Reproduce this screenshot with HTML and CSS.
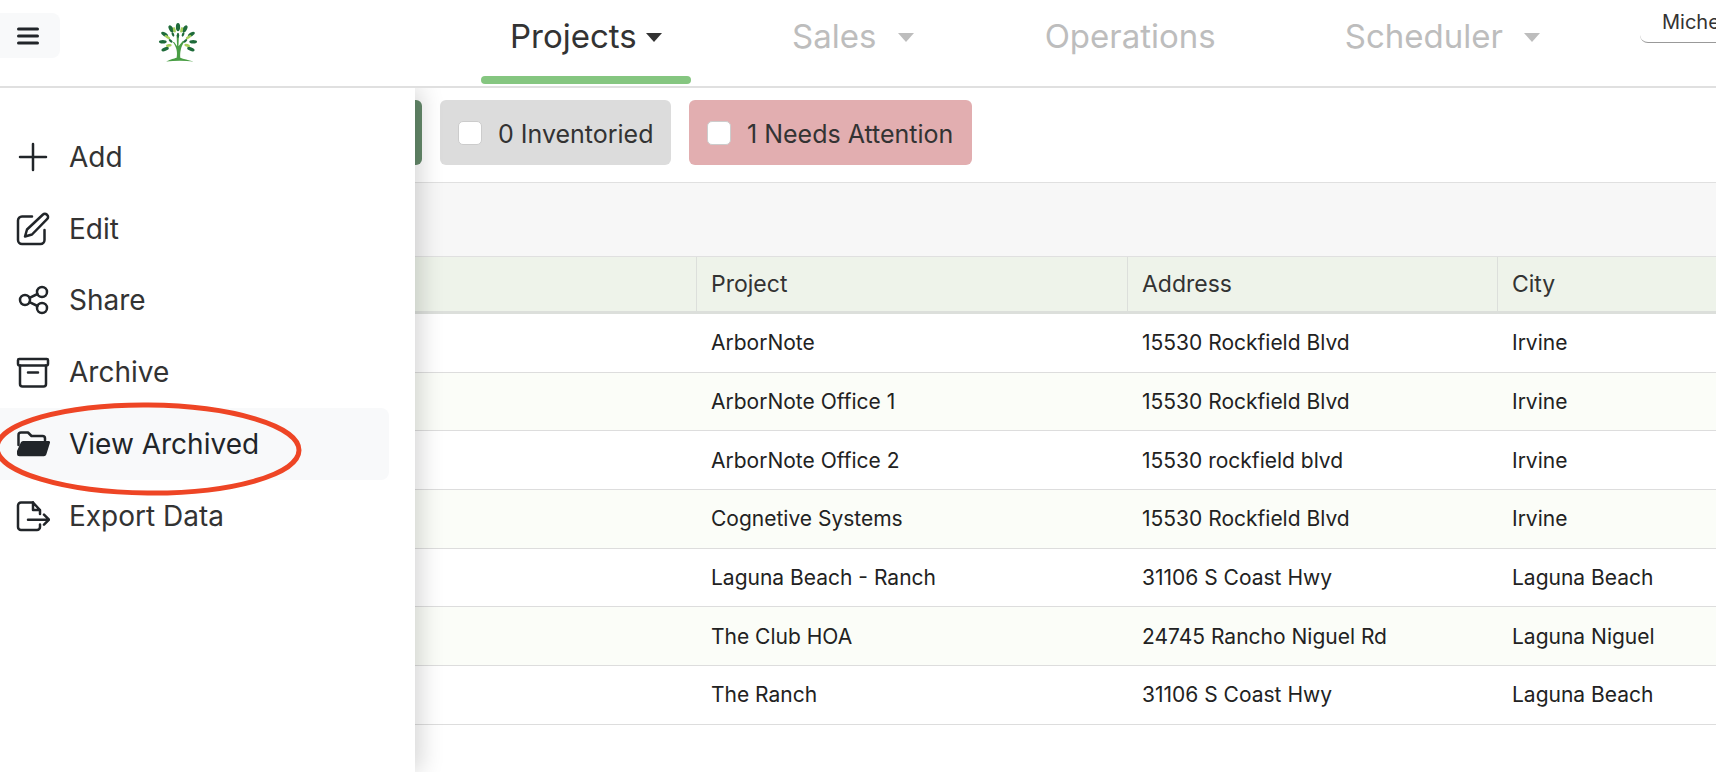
FILE: index.html
```html
<!DOCTYPE html>
<html lang="en">
<head>
    <meta charset="UTF-8" />
    <title>ArborNote Projects</title>
    <link rel="stylesheet" href="styles.css">
</head>
<body>
<header class="topbar">
    <button class="menu-btn" aria-label="Menu">
        <svg width="22" height="18" viewBox="0 0 22 18"><path d="M1.5 2h19M1.5 9h19M1.5 16h19" stroke="#212529" stroke-width="3" stroke-linecap="round"/></svg>
    </button>
    <div class="logo">
        <svg width="60" height="62" viewBox="0 0 60 62">
            <g transform="translate(30 54) scale(.92) translate(-30 -54)">
            <path d="M17 53.500C23 51 25 50.500 28.500 49.500 29.500 44 29 38 24 32L26 32.500 29 37 28.500 25H31L30.500 37 35.500 31 37 32C33 37 32 44 32.500 49.500 36 51 41 52 47 53.500 37 52.500 27 52.500 17 53.500Z" fill="#4a9e45"/>
            <g fill="#1f6b3a">
                <ellipse cx="30" cy="16" rx="2.300" ry="4.500"/>
                <ellipse cx="22.500" cy="18" rx="2.200" ry="4.200" transform="rotate(-30 22.500 18)"/>
                <ellipse cx="37.500" cy="18" rx="2.200" ry="4.200" transform="rotate(30 37.500 18)"/>
                <ellipse cx="15.500" cy="24" rx="2" ry="4.200" transform="rotate(-58 15.500 24)"/>
                <ellipse cx="44.500" cy="24" rx="2" ry="4.200" transform="rotate(58 44.500 24)"/>
                <ellipse cx="13.500" cy="32" rx="1.900" ry="4.200" transform="rotate(90 13.500 32)"/>
                <ellipse cx="46.500" cy="32" rx="1.900" ry="4.200" transform="rotate(90 46.500 32)"/>
                <ellipse cx="16" cy="40" rx="2" ry="4.200" transform="rotate(70 16 40)"/>
                <ellipse cx="44" cy="40" rx="2" ry="4.200" transform="rotate(-70 44 40)"/>
                <ellipse cx="30" cy="25" rx="1.300" ry="2.800"/>
                <ellipse cx="24.500" cy="24" rx="1.300" ry="2.500" transform="rotate(-20 24.500 24)"/>
                <ellipse cx="35.500" cy="24" rx="1.300" ry="2.500" transform="rotate(20 35.500 24)"/>
                <ellipse cx="22" cy="31" rx="1.300" ry="2.500" transform="rotate(-50 22 31)"/>
                <ellipse cx="38" cy="31" rx="1.300" ry="2.500" transform="rotate(50 38 31)"/>
            </g>
            <g fill="#a5cf5a">
                <ellipse cx="26" cy="19" rx="1.500" ry="3" transform="rotate(-15 26 19)"/>
                <ellipse cx="34" cy="19" rx="1.500" ry="3" transform="rotate(15 34 19)"/>
                <ellipse cx="18.500" cy="27" rx="1.500" ry="3.400" transform="rotate(-60 18.500 27)"/>
                <ellipse cx="41.500" cy="27" rx="1.500" ry="3.400" transform="rotate(60 41.500 27)"/>
                <ellipse cx="20" cy="36" rx="1.500" ry="3.200" transform="rotate(80 20 36)"/>
                <ellipse cx="40" cy="36" rx="1.500" ry="3.200" transform="rotate(-75 40 36)"/>
            </g>
            </g>
        </svg>
    </div>
    <nav class="main-nav">
        <a class="nav-item active">Projects <span class="caret"></span></a>
        <a class="nav-item sales">Sales <span class="caret wide"></span></a>
        <a class="nav-item ops">Operations</a>
        <a class="nav-item sched">Scheduler <span class="caret wide"></span></a>
    </nav>
    <div class="user-box">Miche</div>
</header>

<aside class="side-menu">
    <a class="side-item">
        <svg class="ico" viewBox="0 0 34 34"><path d="M17 4v26M4 17h26"/></svg>
        Add
    </a>
    <a class="side-item">
        <svg class="ico" viewBox="0 0 34 34"><path d="M16 4.500H6a4 4 0 0 0-4 4V28a4 4 0 0 0 4 4h18.500a4 4 0 0 0 4-4V18"/><path d="M27 2.500a2.600 2.600 0 0 1 3.700 0l.6.6a2.600 2.600 0 0 1 0 3.700L16 22.500l-7 2 2-7z"/></svg>
        Edit
    </a>
    <a class="side-item">
        <svg class="ico" viewBox="0 0 34 34"><circle cx="9" cy="17" r="5"/><circle cx="26" cy="9" r="5"/><circle cx="26" cy="25" r="5"/><path d="M13.500 14.800l8-3.800M13.500 19.200l8 3.800"/></svg>
        Share
    </a>
    <a class="side-item">
        <svg class="ico" viewBox="0 0 34 34"><rect x="2" y="4" width="30" height="6.500" rx="1.200"/><path d="M4 10.500V29a2.500 2.500 0 0 0 2.500 2.500h21A2.500 2.500 0 0 0 30 29V10.500M12 17.500h10"/></svg>
        Archive
    </a>
    <a class="side-item selected">
        <svg class="ico" viewBox="0 0 34 34"><path d="M2.500 18V8a2.500 2.500 0 0 1 2.500-2.500h7l3.500 3.500h11a2.500 2.500 0 0 1 2.500 2.500v2"/><path class="solid" d="M7 14h25.500a1.500 1.500 0 0 1 1.400 2l-3.600 11.500a2.500 2.500 0 0 1-2.400 1.800H3.500A2.500 2.500 0 0 1 1 26.800V24l3.800-8.500A2.400 2.400 0 0 1 7 14z"/></svg>
        View Archived
    </a>
    <a class="side-item">
        <svg class="ico" viewBox="0 0 34 34"><path d="M17 3.500H5a3 3 0 0 0-3 3V28a3 3 0 0 0 3 3h16a3 3 0 0 0 3-3v-2.500"/><path d="M17 3.500L24 11v4M17 3.500V11h7M12 20.700h21M28 15.700l5 5-5 5"/></svg>
        Export Data
    </a>
</aside>

<svg class="circle-mark" width="320" height="110" viewBox="0 0 320 110">
    <ellipse cx="148" cy="54" rx="151" ry="44" fill="none" stroke="#ee4525" stroke-width="5" transform="rotate(0.500 148 54)"/>
</svg>

<main>
    <div class="filters">
        <label class="chip green"><span class="box"></span><span class="chip-text">2 Active</span></label>
        <label class="chip grey"><span class="box"></span><span class="chip-text">0 Inventoried</span></label>
        <label class="chip red"><span class="box"></span><span class="chip-text">1 Needs Attention</span></label>
    </div>
    <div class="toolbar"></div>
    <table class="grid">
        <colgroup>
            <col class="c-first"><col class="c-project"><col class="c-address"><col>
        </colgroup>
        <thead>
            <tr><th></th><th>Project</th><th>Address</th><th>City</th></tr>
        </thead>
        <tbody>
            <tr><td></td><td>ArborNote</td><td>15530 Rockfield Blvd</td><td>Irvine</td></tr>
            <tr><td></td><td>ArborNote Office 1</td><td>15530 Rockfield Blvd</td><td>Irvine</td></tr>
            <tr><td></td><td>ArborNote Office 2</td><td>15530 rockfield blvd</td><td>Irvine</td></tr>
            <tr><td></td><td>Cognetive Systems</td><td>15530 Rockfield Blvd</td><td>Irvine</td></tr>
            <tr><td></td><td>Laguna Beach - Ranch</td><td>31106 S Coast Hwy</td><td>Laguna Beach</td></tr>
            <tr><td></td><td>The Club HOA</td><td>24745 Rancho Niguel Rd</td><td>Laguna Niguel</td></tr>
            <tr><td></td><td>The Ranch</td><td>31106 S Coast Hwy</td><td>Laguna Beach</td></tr>
        </tbody>
    </table>
</main>
</body>
</html>
```

FILE: styles.css
```css
html, body {
    height: 100%;
}
body {
    margin: 0;
    font-family: Inter, "Liberation Sans", sans-serif;
    color: #333;
    background: #fff;
    overflow: hidden;
    position: relative;
}

/* top bar */
.topbar {
    display: flex;
    height: 86px;
    border-bottom: 2px solid #e0e0e0;
    background: #fff;
    position: relative;
    z-index: 3;
}
.menu-btn {
    display: flex;
    align-items: center;
    justify-content: center;
    width: 60px;
    height: 45px;
    margin-top: 13px;
    padding: 0 5px 0 0;
    border: 0;
    border-radius: 0 8px 8px 0;
    background: #f8f9fa;
}
.logo {
    margin: 8px 0 0 88px;
}
.logo svg {
    filter: blur(.3px);
}
.main-nav {
    display: flex;
    margin-left: 273px;
    font-size: 33px;
}
.nav-item {
    display: block;
    padding: 16px 29px 0;
    white-space: nowrap;
    color: #bdbdbd;
}
.nav-item.active {
    color: #333;
}
.nav-item.active::after {
    content: '';
    display: block;
    height: 8px;
    margin: 20px -29px 0;
    background: #85c680;
    border-radius: 4px;
}
.nav-item.sales { margin-left: 72px; }
.nav-item.ops { margin-left: 73px; }
.nav-item.sched { margin-left: 71px; }
.caret {
    display: inline-block;
    width: 0;
    height: 0;
    vertical-align: 6px;
    border-left: 8.500px solid transparent;
    border-right: 8.500px solid transparent;
    border-top: 9px solid currentColor;
}
.caret.wide {
    margin-left: 12px;
}
.user-box {
    position: absolute;
    left: 1640px;
    top: 8px;
    width: 76px;
    height: 35px;
    padding: 2px 0 0 22px;
    box-sizing: border-box;
    font-size: 20px;
    white-space: nowrap;
    border-bottom: 1px solid #999;
    border-radius: 0 0 0 8px;
}

/* slide-out menu */
.side-menu {
    position: absolute;
    top: 88px;
    left: 0;
    bottom: 0;
    z-index: 2;
    width: 415px;
    padding: 33px 26px 0 0;
    box-sizing: border-box;
    background: #fff;
    box-shadow: 6px 0 22px rgba(0, 0, 0, .16);
}
.side-item {
    display: flex;
    align-items: center;
    gap: 19px;
    height: 71.750px;
    padding-left: 16px;
    font-size: 28px;
    color: #333;
    border-radius: 0 8px 8px 0;
}
.side-item.selected {
    background: #f8f9fa;
    color: #212529;
}
.ico {
    width: 34px;
    height: 34px;
    flex: none;
    fill: none;
    stroke: #212529;
    stroke-width: 2.500;
    stroke-linecap: round;
    stroke-linejoin: round;
}
.ico .solid {
    fill: #212529;
    stroke: none;
}
.circle-mark {
    position: absolute;
    left: 0;
    top: 395px;
    z-index: 2;
}

/* filter chips */
.filters {
    display: flex;
    gap: 18px;
    height: 95px;
    padding: 12px 0 0 200px;
    box-sizing: border-box;
    border-bottom: 1px solid #e0e0e0;
}
.chip {
    display: flex;
    align-items: center;
    gap: 16px;
    height: 65px;
    padding: 0 18px;
    box-sizing: border-box;
    border-radius: 6px;
    font-size: 25px;
    white-space: nowrap;
}
.chip-text {
    margin-top: 3px;
}
.chip.green {
    width: 222px;
    background: #658a6b;
}
.chip.grey {
    width: 231px;
    background: #dcdcdc;
}
.chip.red {
    width: 283px;
    background: #e2aeb0;
}
.box {
    width: 24px;
    height: 24px;
    flex: none;
    background: #fff;
    border: 1px solid #ccc;
    box-sizing: border-box;
    border-radius: 5px;
}
.toolbar {
    height: 73px;
    background: #f7f7f7;
    border-bottom: 1px solid #e0e0e0;
}

/* projects table */
.grid {
    width: 100%;
    table-layout: fixed;
    border-collapse: separate;
    border-spacing: 0;
}
.c-first { width: 696px; }
.c-project { width: 431px; }
.c-address { width: 370px; }
.grid th {
    height: 57px;
    padding: 0 15px 0 14px;
    background: #eef3ea;
    border-bottom: 3px solid #dcdfdb;
    border-left: 1px solid #dcdfdb;
    font-size: 23px;
    font-weight: 400;
    text-align: left;
    box-sizing: border-box;
}
.grid td {
    height: 58.700px;
    padding: 0 15px;
    font-size: 21px;
    color: #222;
    border-bottom: 1px solid #ddd;
    box-sizing: border-box;
}
.grid tbody tr:nth-child(even) td {
    background: #fbfdf8;
}
```
